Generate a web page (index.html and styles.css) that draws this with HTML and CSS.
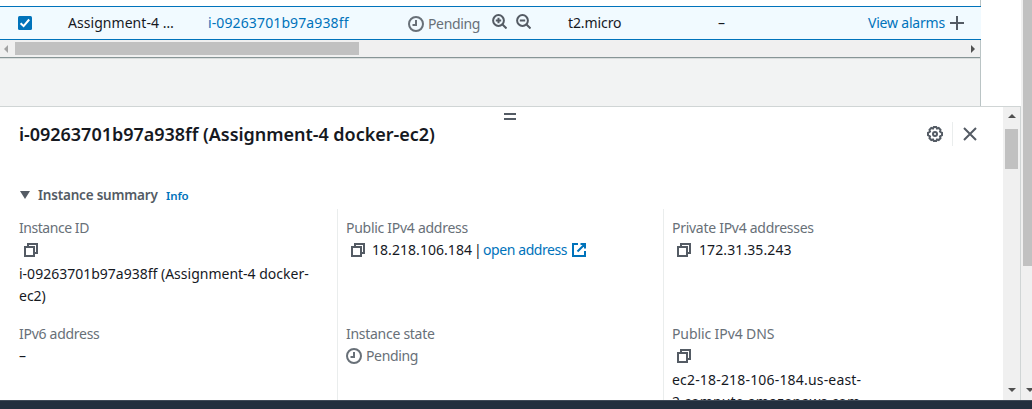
FILE: index.html
```
<!DOCTYPE html>
<html lang="en">
<head>
<meta charset="utf-8">
<title>Instances</title>
<link rel="stylesheet" href="styles.css">
</head>
<body>
<svg class="defs" aria-hidden="true">
  <symbol id="copy" viewBox="0 0 14 14"><path d="M1 4h9v9H1zM4 4V1h9v9h-3" fill="none" stroke="currentColor" stroke-width="2"/></symbol>
  <symbol id="clock" viewBox="0 0 16 16"><circle cx="8" cy="8" r="7" fill="none" stroke="currentColor" stroke-width="2"/><path d="M8 4v5H4.5" fill="none" stroke="currentColor" stroke-width="2"/></symbol>
</svg>
<div class="app">
  <div class="workspace">
    <main class="main">
      <section class="table">
        <div class="row">
          <span class="cell cell-check"><svg class="checkbox" viewBox="0 0 14 14"><rect width="14" height="14" rx="1.5" fill="#0073bb"/><path d="M2.6 7.2l3 2.9 5.6-6.6" fill="none" stroke="#fff" stroke-width="2"/></svg></span>
          <span class="cell cell-name">Assignment-4 …</span>
          <a class="cell cell-id">i-09263701b97a938ff</a>
          <span class="cell cell-state"><svg class="i16"><use href="#clock"/></svg><span class="pending">Pending</span>
            <svg class="lens" viewBox="0 0 15 15"><circle cx="6.5" cy="6.5" r="5.4"/><path d="M10.5 10.5l4 4M3.8 6.5h5.4M6.5 3.8v5.4"/></svg>
            <svg class="lens" viewBox="0 0 15 15"><circle cx="6.5" cy="6.5" r="5.4"/><path d="M10.5 10.5l4 4M3.8 6.5h5.4"/></svg>
          </span>
          <span class="cell cell-type">t2.micro</span>
          <span class="cell cell-dash">–</span>
          <a class="cell cell-alarm">View alarms</a>
          <svg class="plus" viewBox="0 0 14 14"><path d="M0 7h14M7 0v14" stroke="#545b64" stroke-width="2"/></svg>
        </div>
        <div class="hscroll">
          <svg class="harrow faded" viewBox="0 0 4 8"><path d="M4 0v8L0 4z"/></svg>
          <div class="hthumb"></div>
          <svg class="harrow" viewBox="0 0 4 8"><path d="M0 0v8l4-4z"/></svg>
        </div>
      </section>
    </main>
    <aside class="panel">
      <div class="content">
        <div class="grip"></div>
        <header class="head">
          <h2 class="title">i-09263701b97a938ff (Assignment-4 docker-ec2)</h2>
          <svg class="i16 gear" viewBox="0 0 16 16"><path d="M6.800 1h2.400l.8 1.500 1.700-.5 1.800 1.800-.5 1.700L15 6.800v2.400l-2 1.300.5 1.700-1.800 1.800-1.700-.5-.8 1.500H6.800L6 13.500l-1.700.5-1.800-1.800.5-1.700-2-1.300V6.800l2-1.300-.5-1.700L4.300 2l1.700.5z"/><circle cx="8" cy="8" r="2"/></svg>
          <span class="rule"></span>
          <svg class="close" viewBox="0 0 14 14"><path d="M1 1l12 12M13 1L1 13"/></svg>
        </header>
        <div class="summary"><svg class="caret" viewBox="0 0 10 8"><path d="M0 0h10L5 8z" fill="#545b64"/></svg><h3 class="subtitle">Instance summary</h3><a class="info">Info</a></div>
        <div class="details">
          <div class="col">
            <div class="field">
              <div class="label tighter">Instance ID</div>
              <div class="value tall"><svg class="copy"><use href="#copy"/></svg></div>
              <div class="text">i-09263701b97a938ff (Assignment-4 docker-<br>ec2)</div>
            </div>
            <div class="field">
              <div class="label">IPv6 address</div>
              <div class="value">–</div>
            </div>
          </div>
          <div class="col">
            <div class="field">
              <div class="label">Public IPv4 address</div>
              <div class="value"><svg class="copy"><use href="#copy"/></svg><span class="ip">18.218.106.184</span><span class="bar">|</span><a class="open">open address</a><svg class="ext" viewBox="0 0 14 14"><path d="M6 1H1v12h12V8M8.500 1H13v4.500M12.500 1.500L5.500 8.500" fill="none" stroke="currentColor" stroke-width="2"/></svg></div>
            </div>
            <div class="field">
              <div class="label">Instance state</div>
              <div class="value"><svg class="i16"><use href="#clock"/></svg><span class="pending">Pending</span></div>
            </div>
          </div>
          <div class="col">
            <div class="field">
              <div class="label">Private IPv4 addresses</div>
              <div class="value"><svg class="copy"><use href="#copy"/></svg><span class="ip wide">172.31.35.243</span></div>
            </div>
            <div class="field">
              <div class="label loose">Public IPv4 DNS</div>
              <div class="value tall"><svg class="copy"><use href="#copy"/></svg></div>
              <div class="text host">ec2-18-218-106-184.us-east-<br>2.compute.amazonaws.com</div>
            </div>
          </div>
        </div>
      </div>
      <div class="vscroll">
        <svg class="varrow" viewBox="0 0 8 4"><path d="M0 4h8L4 0z"/></svg>
        <div class="vthumb"></div>
        <svg class="varrow end" viewBox="0 0 8 4"><path d="M0 0h8L4 4z"/></svg>
      </div>
    </aside>
  </div>
  <div class="pagescroll">
    <div class="pagethumb"></div>
    <svg class="varrow end" viewBox="0 0 8 4"><path d="M0 0h8L4 4z"/></svg>
  </div>
  <footer class="footer"></footer>
</div>
</body>
</html>
```
FILE: styles.css
```
* { box-sizing: border-box; }
body { margin: 0; overflow: hidden; background: #fff; color: #16191f; font: 14px/22px "Noto Sans", "Open Sans", sans-serif; }
svg { display: block; flex: none; }
a { color: #0073bb; }
h2, h3 { margin: 0; }
.defs { position: absolute; width: 0; height: 0; }
.app { display: grid; grid-template: 400px 9px / 1021px 11px; width: 1032px; height: 409px; overflow: hidden; }
.workspace { min-width: 0; display: grid; grid-template-rows: 106px 294px; }
.main { width: 981px; background: #f2f3f3; border-right: 1px solid #bac4c5; }
.table { height: 59px; padding-top: 6px; background: #fff; border-bottom: 1px solid #d9dddd; }
.row { display: flex; align-items: center; width: 981px; height: 34px; background: #f1faff; border: solid #0073bb; border-width: 1px 0; }
.cell { flex: none; white-space: nowrap; }
.cell-check { width: 68px; padding-left: 18px; }
.checkbox { width: 14px; height: 14px; }
.cell-name { width: 140px; letter-spacing: 0.05px; }
.cell-id { width: 200px; letter-spacing: 0.12px; }
.cell-state { display: flex; align-items: center; width: 160px; padding-top: 1px; }
.i16 { width: 16px; height: 16px; color: #687078; }
.pending { width: 52px; margin-left: 4px; color: #687078; letter-spacing: -0.35px; }
.lens { width: 15px; height: 15px; margin: -4px 0 0 12px; fill: none; stroke: #545b64; stroke-width: 2; }
.lens + .lens { margin-left: 9px; }
.cell-type { width: 150px; letter-spacing: -0.1px; }
.cell-dash { width: 150px; }
.cell-alarm { width: 82px; letter-spacing: -0.2px; }
.plus { width: 14px; height: 14px; }
.hscroll { display: flex; align-items: center; height: 18px; padding: 0 5px 0 4px; background: #f0f0f0; border-bottom: 1px solid #879596; }
.harrow { width: 4px; height: 8px; margin-left: auto; fill: #505050; }
.harrow.faded { margin: 0 7px 0 0; fill: #a3a3a3; }
.hthumb { width: 344px; height: 13px; background: #c1c1c1; }
.panel { display: grid; grid-template: 293px / 1003px 17px; border: solid #d0d5d5; border-width: 1px 1px 0 0; background: #fff; }
.content { min-width: 0; overflow: hidden; }
.grip { width: 12px; height: 7px; margin: 6px 0 0 504px; border: solid #545b64; border-width: 2px 0; }
.head { display: flex; align-items: center; height: 28px; padding-left: 19px; }
.title { width: 908px; font-size: 18px; font-weight: 600; letter-spacing: -0.03px; white-space: nowrap; }
.gear, .close { fill: none; stroke: #545b64; stroke-width: 2; }
.rule { width: 1px; height: 24px; margin: 0 10px 0 9px; background: #eaeded; }
.close { width: 14px; height: 14px; }
.summary { display: flex; align-items: center; height: 22px; margin-top: 36px; padding-left: 20px; }
.caret { width: 10px; height: 8px; }
.subtitle { width: 128px; margin-left: 8px; font-size: 13.5px; font-weight: 600; letter-spacing: -0.2px; color: #545b64; white-space: nowrap; }
.info { padding-top: 1px; font-size: 11.5px; font-weight: 600; letter-spacing: -0.1px; }
.details { display: grid; grid-template-columns: 337px 326px 340px; height: 200px; margin-top: 3px; }
.col { display: grid; grid-template-rows: 90px auto; align-content: start; row-gap: 16px; padding: 8px 0 0 8px; border-left: 1px solid #eaeded; white-space: nowrap; }
.col:first-child { padding-left: 19px; border: 0; }
.label { color: #687078; letter-spacing: -0.28px; }
.label.tighter { letter-spacing: -0.45px; }
.label.loose { letter-spacing: -0.1px; }
.value { display: flex; align-items: center; height: 22px; }
.value.tall { height: 24px; padding-bottom: 2px; }
.copy { width: 14px; height: 14px; margin-left: 5px; color: #545b64; }
.ip { margin-left: 7px; letter-spacing: 0.05px; }
.ip.wide { margin-left: 8px; letter-spacing: 0.1px; }
.bar { width: 7px; margin-left: 2px; text-align: center; }
.open { width: 85px; margin-left: 2px; letter-spacing: -0.42px; }
.ext { width: 14px; height: 14px; margin-left: 4px; color: #0073bb; }
.host { letter-spacing: 0.18px; }
.vscroll { display: flex; flex-direction: column; align-items: center; background: #f0f0f0; padding: 7px 0 8px; }
.varrow { width: 8px; height: 4px; fill: #505050; }
.varrow.end { margin-top: auto; }
.vthumb { width: 13px; height: 40px; margin-top: 11px; background: #c1c1c1; }
.pagescroll { display: flex; flex-direction: column; padding: 0 0 8px 2px; background: #f0f0f0; }
.pagethumb { height: 266px; background: #c1c1c1; }
.pagescroll .varrow { margin-left: 3px; }
.footer { grid-column: 1 / -1; background: #232f3e; border-top: 1px solid #414b58; }
```
